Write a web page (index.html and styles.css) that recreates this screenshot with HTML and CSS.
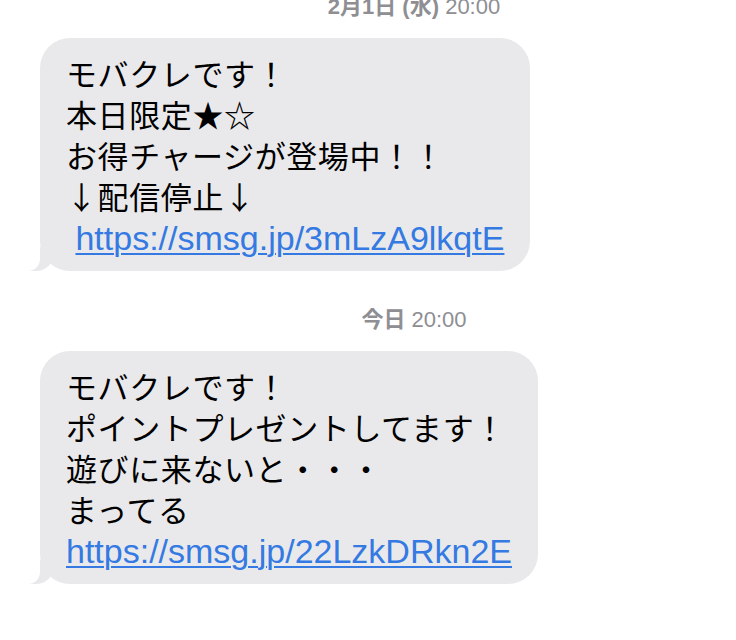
FILE: index.html
```html
<!DOCTYPE html>
<html lang="ja">
<head>
  <meta charset="utf-8">
  <title>メッセージ</title>
  <link rel="stylesheet" href="styles.css">
</head>
<body>
  <div class="thread">
    <div class="stamp first"><b>2月1日 (水)</b> 20:00</div>
    <div class="bubble">
      <p class="msg">モバクレです！<br>本日限定★☆<br>お得チャージが登場中！！<br>↓配信停止↓<br><span class="url">&nbsp;<a href="#">https://smsg.jp/3mLzA9lkqtE</a></span></p>
    </div>

    <div class="stamp"><b>今日</b> 20:00</div>
    <div class="bubble">
      <p class="msg">モバクレです！<br>ポイントプレゼントしてます！<br>遊びに来ないと・・・<br>まってる<br><span class="url"><a href="#">https://smsg.jp/22LzkDRkn2E</a></span></p>
    </div>
  </div>
</body>
</html>
```

FILE: styles.css
```css
body {
  margin: 0;
  background: #fff;
  overflow: hidden;
}

.thread {
  display: flex;
  flex-direction: column;
  align-items: flex-start;
}

.stamp {
  align-self: stretch;
  box-sizing: border-box;
  padding-left: 92px;
  margin-top: 36px;
  margin-bottom: 18px;
  text-align: center;
  font-family: "Liberation Sans", "Noto Sans CJK JP", sans-serif;
  font-size: 22px;
  line-height: 26px;
  color: #8e8e93;
}
.stamp.first {
  margin-top: -6px;
}
.stamp b {
  font-weight: 600;
}

.bubble {
  position: relative;
  margin-left: 40px;
  padding: 14px 26px 14px 26px;
  background: #e9e9eb;
  border-radius: 30px;
}
.bubble::before {
  content: "";
  position: absolute;
  left: -12px;
  bottom: 0;
  width: 26px;
  height: 24px;
  background: #e9e9eb;
  border-bottom-right-radius: 18px;
}
.bubble::after {
  content: "";
  position: absolute;
  left: -26px;
  bottom: 0;
  width: 26px;
  height: 24px;
  background: #fff;
  border-bottom-right-radius: 12px;
}

.msg {
  position: relative;
  z-index: 1;
  margin: 0;
  font-family: "Noto Sans CJK JP", sans-serif;
  font-size: 31px;
  line-height: 41px;
  letter-spacing: 0.6px;
  color: #000;
}

.url {
  font-family: "Liberation Sans", sans-serif;
  font-size: 34px;
  line-height: 1;
  letter-spacing: 0;
}
.url a {
  color: #347ae2;
  text-decoration: underline;
  text-decoration-thickness: 2px;
  text-underline-offset: 3px;
}
```
